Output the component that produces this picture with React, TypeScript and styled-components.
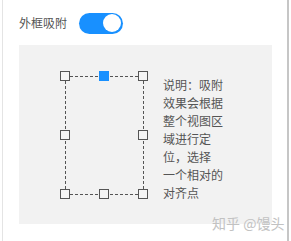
import React from "react";
import styled, { createGlobalStyle } from "styled-components";

const Global = createGlobalStyle`
  html, body { margin: 0; padding: 0; background: #fff; }
  body { font-family: "Noto Sans CJK SC", "Noto Sans", sans-serif; }
`;

const Card = styled.div`
  position: relative;
  box-sizing: border-box;
  margin-left: 2px;
  width: 287px;
  height: 241px;
  border-left: 1px solid #e4e4e4;
  border-right: 2px solid #c6c6c6;
  padding: 12px 0 0 16px;
`;

const Row = styled.div`
  display: flex;
  align-items: center;
  gap: 12px;
  height: 22px;
`;

const Label = styled.span`
  font-size: 12px;
  color: #555;
  line-height: 22px;
  width: 48px;
  white-space: nowrap;
`;

const Toggle = styled.div<{ $on: boolean }>`
  position: relative;
  width: 44px;
  height: 21px;
  border-radius: 11px;
  background: ${(p) => (p.$on ? "#1890ff" : "#ccc")};
`;

const Knob = styled.div<{ $on: boolean }>`
  position: absolute;
  top: 1.5px;
  left: ${(p) => (p.$on ? "24px" : "2px")};
  width: 18px;
  height: 18px;
  border-radius: 50%;
  background: #fff;
`;

const Panel = styled.div`
  margin-top: 11px;
  width: 253px;
  height: 179px;
  background: #f2f2f2;
  box-sizing: border-box;
  padding: 26px 0 0 41px;
  display: flex;
  align-items: flex-start;
  gap: 14px;
`;

const Note = styled.div`
  margin-top: 5px;
  width: 64px;
  font-size: 12px;
  line-height: 18px;
  color: #555;
`;

const NoteLine = styled.span`
  display: block;
  white-space: nowrap;
`;

const Watermark = styled.div`
  position: absolute;
  left: 209px;
  top: 213px;
  font-size: 14px;
  line-height: 20px;
  color: #c2c2c2;
  white-space: nowrap;
`;

const Frame = () => {
  const xs = [5, 44, 83];
  const ys = [5, 64, 123];
  const handles: Array<[number, number, boolean]> = [];
  handles.push([xs[0], ys[0], false], [xs[1], ys[0], true], [xs[2], ys[0], false]);
  handles.push([xs[0], ys[1], false], [xs[2], ys[1], false]);
  handles.push([xs[0], ys[2], false], [xs[1], ys[2], false], [xs[2], ys[2], false]);
  const dash = { stroke: "#555", strokeWidth: 1, strokeDasharray: "3 2" };
  return (
    <svg width="89" height="129" viewBox="0 0 89 129">
      <line x1={10} y1={5.5} x2={78} y2={5.5} {...dash} />
      <line x1={10} y1={123.5} x2={78} y2={123.5} {...dash} />
      <line x1={5.5} y1={10} x2={5.5} y2={118} {...dash} />
      <line x1={83.5} y1={10} x2={83.5} y2={118} {...dash} />
      {handles.map(([cx, cy, active], i) =>
        active ? (
          <rect key={i} x={cx - 5} y={cy - 5} width={10} height={10} fill="#1890ff" />
        ) : (
          <rect
            key={i}
            x={cx - 4.5}
            y={cy - 4.5}
            width={9}
            height={9}
            fill="#f5f5f5"
            stroke="#555"
            strokeWidth={1}
          />
        )
      )}
    </svg>
  );
};

const noteLines = ["说明：吸附", "效果会根据", "整个视图区", "域进行定", "位，选择", "一个相对的", "对齐点"];

export default function App() {
  return (
    <>
      <Global />
      <Card>
        <Row>
          <Label>外框吸附</Label>
          <Toggle $on>
            <Knob $on />
          </Toggle>
        </Row>
        <Panel>
          <Frame />
          <Note>
            {noteLines.map((l) => (
              <NoteLine key={l}>{l}</NoteLine>
            ))}
          </Note>
        </Panel>
        <Watermark>知乎 @馒头</Watermark>
      </Card>
    </>
  );
}
